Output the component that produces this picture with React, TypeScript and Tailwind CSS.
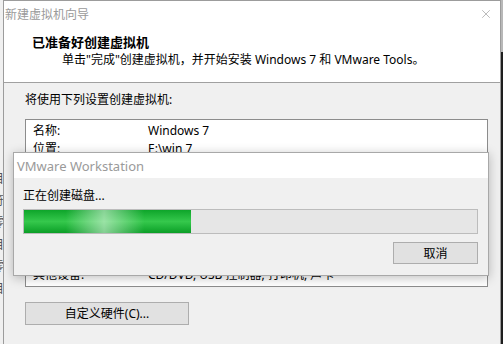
import { X } from 'lucide-react';

const rows: [string, string][] = [
    ['名称:', 'Windows 7'],
    ['位置:', 'E:\\win 7'],
    ['版本:', 'Workstation 12.0'],
    ['操作系统:', 'Windows 7'],
    ['硬盘:', '60 GB'],
    ['内存:', '1024 MB'],
    ['网络适配器:', 'NAT'],
    ['处理器:', '1'],
    ['其他设备:', 'CD/DVD, USB 控制器, 打印机, 声卡'],
];

const ghost = ['(', '目', '符', '零', '目', '零', '目'];

export default function App() {
    return (
        <div className="relative flex w-[503px] h-[344px] overflow-hidden bg-[#f0f0f0] text-[12px] text-[#000] font-['Noto_Sans','Noto_Sans_CJK_SC',sans-serif]">
            {/* window behind, left edge */}
            <div className="w-[3px] shrink-0 overflow-hidden bg-[#f0f0f0]">
                <div className="flex flex-col gap-[8px] pt-[150px] -ml-[8px] text-[#555] leading-[14px]">
                    {ghost.map((g, i) => <span key={i}>{g}</span>)}
                </div>
            </div>

            {/* wizard window */}
            <div className="flex flex-col w-[498px] shrink-0 border-l border-r border-t border-[#9c9c9c]">
                <div className="flex shrink-0 items-center justify-between h-[26px] bg-white pl-[1px] pr-[7px]">
                    <span className="text-[#9a9a9a] leading-[14px] pt-[1px]">新建虚拟机向导</span>
                    <X className="w-[14px] h-[14px] text-[#8a8a8a]" strokeWidth={1} />
                </div>
                <div className="flex shrink-0 flex-col h-[56px] bg-white border-b border-[#a0a0a0] pl-[28px] pt-[7px]">
                    <span className="font-bold text-[13px] leading-[16px]">已准备好创建虚拟机</span>
                    <span className="pl-[30px] pt-[2px] leading-[15px]">单击"完成"创建虚拟机，并开始安装 Windows 7 和 VMware Tools。</span>
                </div>
                <div className="flex shrink-0 flex-col pl-[21px] pr-[12px] pt-[9px]">
                    <span className="leading-[15px]">将使用下列设置创建虚拟机:</span>
                    <div className="shrink-0 mt-[12px] h-[168px] border border-[#8c8c8c] bg-white pl-[7px] pt-[2px] overflow-hidden">
                        {rows.map(([k, v]) => (
                            <div key={k} className="flex h-[18px] items-center">
                                <span className="w-[115px] shrink-0">{k}</span>
                                <span>{v}</span>
                            </div>
                        ))}
                    </div>
                    <button className="shrink-0 mt-[15px] w-[164px] h-[23px] bg-[#e1e1e1] border border-[#adadad] leading-[15px]">
                        自定义硬件(C)...
                    </button>
                    <div className="shrink-0 mt-[21px] w-[12px] h-[12px] border border-[#333] bg-white" />
                </div>
            </div>

            {/* right edge */}
            <div className="flex flex-col w-[2px] shrink-0">
                <div className="h-[52px] bg-[#b8b8b8]" />
                <div className="flex-1 bg-[#1e1e1e]" />
            </div>

            {/* progress dialog */}
            <div className="absolute left-[13px] top-[152px] flex flex-col w-[476px] h-[124px] border border-[#a8a8a8] bg-[#f0f0f0] shadow-[0_2px_10px_rgba(0,0,0,0.25)]">
                <div className="flex items-center h-[25px] bg-white pl-[3px]">
                    <span className="text-[13px] text-[#9a9a9a] leading-[16px]">VMware Workstation</span>
                </div>
                <div className="flex flex-col pl-[9px] pr-[10px] pt-[10px]">
                    <span className="leading-[15px]">正在创建磁盘...</span>
                    <div className="mt-[6px] h-[25px] border border-[#bcbcbc] bg-[#e6e6e6]">
                        <div className="h-full w-[167px] bg-[linear-gradient(90deg,rgba(255,255,255,0)_25%,rgba(255,255,255,0.5)_48%,rgba(255,255,255,0)_72%),linear-gradient(180deg,#0ea52a,#35c84c_50%,#0b9f27)]" />
                    </div>
                    <div className="flex justify-end mt-[8px]">
                        <button className="w-[85px] h-[22px] bg-[#e1e1e1] border border-[#adadad] leading-[15px]">取消</button>
                    </div>
                </div>
            </div>
        </div>
    );
}
